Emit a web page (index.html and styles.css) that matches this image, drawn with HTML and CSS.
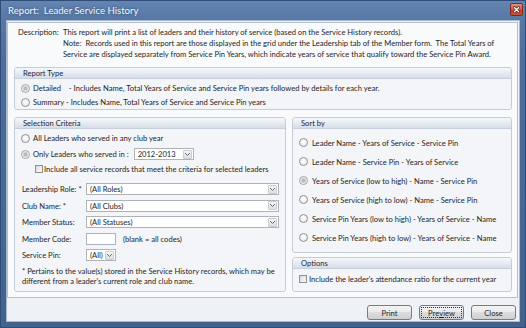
FILE: index.html
```html
<!DOCTYPE html>
<html>
<head>
<meta charset="utf-8">
<link rel="stylesheet" href="styles.css">
</head>
<body>
<div class="window">
  <div class="titlebar">
    <span class="title">Report:  Leader Service History</span>
    <span class="close-btn"><svg width="13" height="12" viewBox="0 0 13 12"><path d="M4 3 L9 8 M9 3 L4 8" stroke="#5a1010" stroke-width="3" stroke-linecap="round"/><path d="M4 3 L9 8 M9 3 L4 8" stroke="#fff" stroke-width="1.6" stroke-linecap="round"/></svg></span>
  </div>
  <div class="client">
    <div class="panel">
      <div class="desc">
        <div class="desc-label">Description:</div>
        <div class="desc-text">
          <div>This report will print a list of leaders and their history of service (based on the Service History records).</div>
          <div>Note:&nbsp; Records used in this report are those displayed in the grid under the Leadership tab of the Member form.&nbsp; The Total Years of</div>
          <div>Service are displayed separately from Service Pin Years, which indicate years of service that qualify toward the Service Pin Award.</div>
        </div>
      </div>

      <section class="group report-type">
        <div class="group-head">Report Type</div>
        <div class="group-body">
          <div class="row rt-row"><span class="radio checked"></span><span>Detailed&nbsp;&nbsp;&nbsp; - Includes Name, Total Years of Service and Service Pin years followed by details for each year.</span></div>
          <div class="row rt-row"><span class="radio"></span><span>Summary - Includes Name, Total Years of Service and Service Pin years</span></div>
        </div>
      </section>

      <div class="columns">
        <section class="group criteria">
          <div class="group-head">Selection Criteria</div>
          <div class="group-body">
            <div class="row crit-row"><span class="radio"></span><span>All Leaders who served in any club year</span></div>
            <div class="row crit-row"><span class="radio checked"></span><span>Only Leaders who served in :</span>
              <span class="combo combo-year"><span class="combo-text">2012-2013</span><span class="combo-arrow"><svg width="7" height="5" viewBox="0 0 7 5"><path d="M1 1 L3.5 3.5 L6 1" fill="none" stroke="#6b6b6b" stroke-width="1"/></svg></span></span>
            </div>
            <div class="row check-row"><span class="checkbox"></span><span>Include all service records that meet the criteria for selected leaders</span></div>
            <div class="fields">
              <div class="field"><span class="field-label">Leadership Role: *</span><span class="combo combo-wide"><span class="combo-text">(All Roles)</span><span class="combo-arrow"><svg width="7" height="5" viewBox="0 0 7 5"><path d="M1 1 L3.5 3.5 L6 1" fill="none" stroke="#6b6b6b" stroke-width="1"/></svg></span></span></div>
              <div class="field"><span class="field-label">Club Name: *</span><span class="combo combo-wide"><span class="combo-text">(All Clubs)</span><span class="combo-arrow"><svg width="7" height="5" viewBox="0 0 7 5"><path d="M1 1 L3.5 3.5 L6 1" fill="none" stroke="#6b6b6b" stroke-width="1"/></svg></span></span></div>
              <div class="field"><span class="field-label">Member Status:</span><span class="combo combo-wide"><span class="combo-text">(All Statuses)</span><span class="combo-arrow"><svg width="7" height="5" viewBox="0 0 7 5"><path d="M1 1 L3.5 3.5 L6 1" fill="none" stroke="#6b6b6b" stroke-width="1"/></svg></span></span></div>
              <div class="field"><span class="field-label">Member Code:</span><span class="textbox"></span><span class="hint">(blank = all codes)</span></div>
              <div class="field"><span class="field-label">Service Pin:</span><span class="combo combo-pin"><span class="combo-text">(All)</span><span class="combo-arrow"><svg width="7" height="5" viewBox="0 0 7 5"><path d="M1 1 L3.5 3.5 L6 1" fill="none" stroke="#6b6b6b" stroke-width="1"/></svg></span></span></div>
            </div>
            <div class="footnote">* Pertains to the value(s) stored in the Service History records, which may be<br>different from a leader's current role and club name.</div>
          </div>
        </section>

        <div class="right-col">
          <section class="group sort">
            <div class="group-head">Sort by</div>
            <div class="group-body">
              <div class="row sort-row"><span class="radio"></span><span>Leader Name - Years of Service - Service Pin</span></div>
              <div class="row sort-row"><span class="radio"></span><span>Leader Name - Service Pin - Years of Service</span></div>
              <div class="row sort-row"><span class="radio checked"></span><span>Years of Service (low to high) - Name - Service Pin</span></div>
              <div class="row sort-row"><span class="radio"></span><span>Years of Service (high to low) - Name - Service Pin</span></div>
              <div class="row sort-row"><span class="radio"></span><span>Service Pin Years (low to high) - Years of Service - Name</span></div>
              <div class="row sort-row"><span class="radio"></span><span>Service Pin Years (high to low) - Years of Service - Name</span></div>
            </div>
          </section>
          <section class="group options">
            <div class="group-head">Options</div>
            <div class="group-body">
              <div class="row opt-row"><span class="checkbox"></span><span>Include the leader's attendance ratio for the current year</span></div>
            </div>
          </section>
        </div>
      </div>
    </div>

    <div class="buttons">
      <button class="btn">Print</button>
      <button class="btn btn-focus"><span class="focus-ring">Pre<u>v</u>iew</span></button>
      <button class="btn">Close</button>
    </div>
  </div>
</div>
</body>
</html>
```

FILE: styles.css
```css
* {
  box-sizing: border-box;
  margin: 0;
  padding: 0;
}

html, body {
  width: 526px;
  height: 328px;
  overflow: hidden;
}

body {
  font-family: Lato, "Noto Sans", sans-serif;
  font-size: 7.6px;
  color: #1e1e1e;
  background: #4a6a98;
}

.window {
  width: 526px;
  height: 328px;
  display: flex;
  flex-direction: column;
  padding: 0 6px 6px 6px;
  background: linear-gradient(#6585b2 0px, #5878a6 18px, #4d6d9b 60px, #42628e 100%);
  box-shadow: inset 0 0 0 1px #2f4d78;
}

.titlebar {
  height: 20px;
  flex: none;
  display: flex;
  align-items: center;
  position: relative;
  padding-left: 2px;
}

.title {
  white-space: pre;
  font-size: 9.6px;
  color: #f4f7fb;
  text-shadow: 0 0 3px rgba(20, 40, 70, 0.6);
}

.close-btn {
  position: absolute;
  right: -3px;
  top: 3px;
  width: 13px;
  height: 13px;
  border: 1px solid #7a2a22;
  border-radius: 2px;
  background: linear-gradient(#e4917f, #cf5a45 50%, #bb3b27 51%, #c9503a);
  display: flex;
  align-items: center;
  justify-content: center;
}

.client {
  flex: 1;
  display: flex;
  flex-direction: column;
  background: #eef1f5;
  border: 1px solid #a7b8cf;
  padding: 1px 1px 0 0;
}

.panel {
  height: 276px;
  flex: none;
  border: 1px solid #b3bfcf;
  background: #f9fafc;
  padding: 4px 5px 5px 6px;
  display: flex;
  flex-direction: column;
}

.desc {
  display: flex;
  padding-left: 4px;
  line-height: 11px;
  white-space: nowrap;
}

.desc-label {
  width: 45px;
  flex: none;
}

.group {
  border: 1px solid #c4ccd7;
  border-radius: 3px;
  background: #f3f5f8;
  overflow: hidden;
}

.group-head {
  height: 11px;
  line-height: 10px;
  padding-left: 8px;
  background: linear-gradient(#f6f7fa, #e4e9f0 60%, #d6dde7);
  border-bottom: 1px solid #c7cfda;
  color: #1d2633;
}

.report-type {
  margin-top: 7px;
  height: 43px;
}

.report-type .group-body {
  padding-top: 2px;
}

.row {
  display: flex;
  align-items: center;
  white-space: nowrap;
}

.rt-row {
  height: 14px;
}

.radio {
  width: 9px;
  height: 9px;
  flex: none;
  border-radius: 50%;
  border: 1px solid #929292;
  background: radial-gradient(circle at 50% 40%, #ffffff, #e4e4e4);
  margin-left: 6px;
  margin-right: 3px;
}

.radio.checked {
  background: radial-gradient(circle, #b9b9b9 0 1.8px, #dcdcdc 2.2px 2.8px, #f7f7f7 3.2px);
  border-color: #a3a3a3;
}

.checkbox {
  width: 8px;
  height: 8px;
  flex: none;
  border: 1px solid #8e8f8f;
  background: linear-gradient(135deg, #dcdcdc, #fafafa);
}

.columns {
  margin-top: 7px;
  display: flex;
  gap: 6px;
}

.criteria {
  width: 272px;
  height: 175px;
}

.criteria .group-body {
  padding: 1px 0 0 0;
}

.crit-row {
  height: 16px;
}

.check-row {
  height: 13px;
  padding-left: 20px;
}

.check-row .checkbox {
  margin-right: 1px;
}

.combo {
  display: flex;
  align-items: center;
  height: 12px;
  border: 1px solid #aeb3ba;
  background: #fff;
  padding-left: 3px;
  padding-right: 1px;
}

.combo-text {
  flex: 1;
  overflow: hidden;
}

.combo-arrow {
  width: 9px;
  height: 9px;
  flex: none;
  border: 1px solid #c9cdd3;
  border-radius: 1px;
  background: linear-gradient(#f4f5f6, #dcdfe3);
  display: flex;
  align-items: center;
  justify-content: center;
}

.combo-year {
  width: 60px;
  margin-left: 5px;
}

.fields {
  margin-top: 6px;
  padding-left: 7px;
}

.field {
  height: 16.5px;
  display: flex;
  align-items: center;
  white-space: nowrap;
}

.field-label {
  width: 64px;
  flex: none;
}

.combo-wide {
  width: 193px;
}

.combo-pin {
  width: 30px;
}

.textbox {
  width: 30px;
  height: 12px;
  border: 1px solid #aeb3ba;
  background: #fff;
}

.hint {
  margin-left: 7px;
}

.footnote {
  margin-top: 2.5px;
  padding-left: 7px;
  line-height: 10px;
  white-space: nowrap;
}

.right-col {
  width: 220px;
  display: flex;
  flex-direction: column;
  gap: 4px;
}

.sort {
  height: 136px;
}

.sort .group-body {
  padding-top: 4px;
}

.sort-row {
  height: 19px;
}

.sort-row .radio {
  margin-left: 6px;
  margin-right: 4px;
}

.options {
  height: 35px;
}

.options .group-body {
  padding-top: 3px;
}

.opt-row {
  height: 14px;
  padding-left: 6px;
}

.opt-row .checkbox {
  margin-right: 2px;
}

.buttons {
  display: flex;
  justify-content: flex-end;
  gap: 7px;
  margin-top: 7px;
  padding-right: 2px;
}

.btn {
  width: 45px;
  height: 15px;
  font-family: Lato, "Noto Sans", sans-serif;
  font-size: 7.6px;
  color: #1e1e1e;
  border: 1px solid #7a7a7a;
  border-radius: 3px;
  background: linear-gradient(#f3f3f3, #ebebeb 45%, #dddddd 50%, #cfcfcf);
  display: flex;
  align-items: center;
  justify-content: center;
}

.btn-focus {
  border-color: #5d7fa8;
  padding: 1px;
}

.focus-ring {
  width: 100%;
  height: 100%;
  border: 1px dotted #333;
  display: flex;
  align-items: center;
  justify-content: center;
}
```
